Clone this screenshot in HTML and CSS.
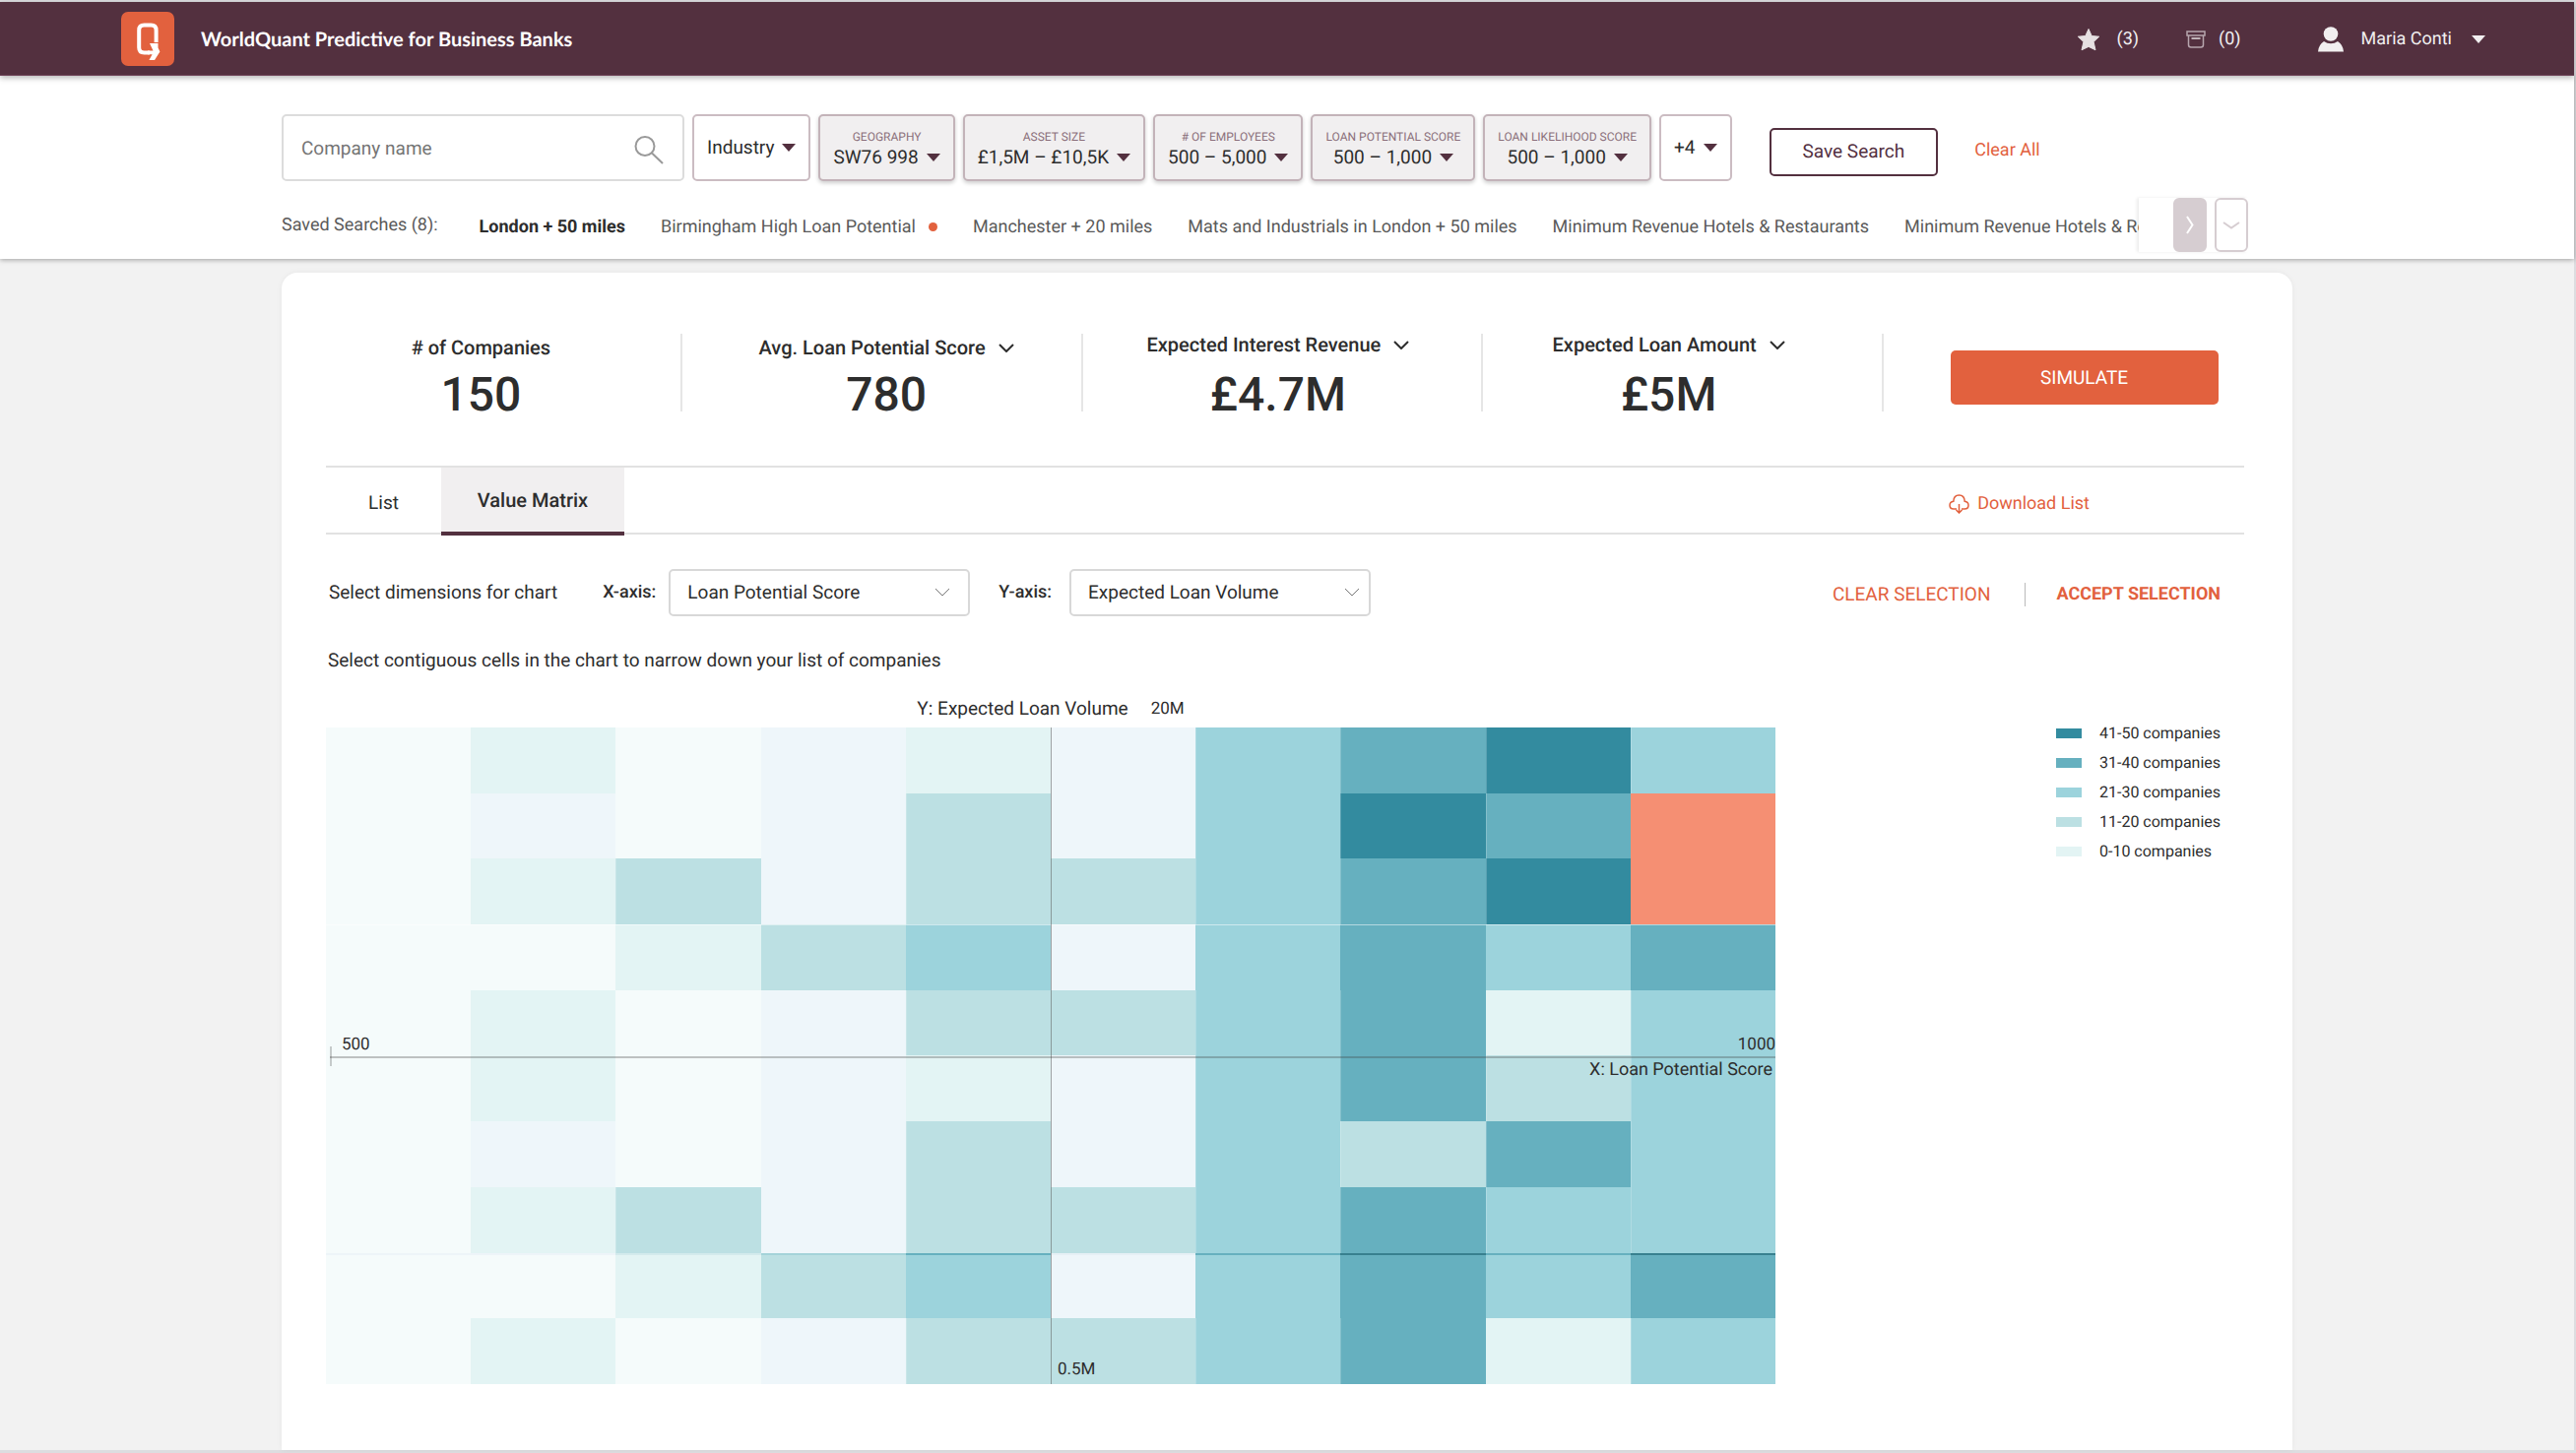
FILE: index.html
```html
<!DOCTYPE html>
<html lang="en">
<head>
<meta charset="utf-8">
<meta name="viewport" content="width=device-width, initial-scale=1">
<title>WorldQuant Predictive for Business Banks</title>
<link rel="stylesheet" href="styles.css">
</head>
<body>
<div class="page">
  <header class="topbar">
    <a class="logo" href="#" aria-label="Home">
      <svg width="54" height="55" viewBox="0 0 54 55" aria-hidden="true"><rect width="54" height="55" rx="7" fill="#e2613e"/><path d="M29 41.500H23.500Q18.200 41.500 18.200 36.200V18.800Q18.200 13.600 23.400 13.600H30.400Q35.600 13.600 35.600 18.800V31" fill="none" stroke="#fff" stroke-width="4"/><path d="M29 32H37.500V36.500L39.400 40.500L34 49H28.400L31.600 43.300H27V39.500H32.500Z" fill="#fff"/></svg>
    </a>
    <span class="brand">WorldQuant Predictive for Business Banks</span>
    <nav class="account">
      <a class="account-link favourites" href="#">
        <svg width="22" height="23" viewBox="0 0 22 23" aria-hidden="true"><path d="M11 0.5l3.2 7 7.5.7-5.6 5.3 1.9 8.3L11 18.4l-7 3.4 1.9-8.3L.3 8.2l7.5-.7z" fill="#e6e0e2" stroke="#e6e0e2" stroke-linejoin="round"/></svg>
        <span>(3)</span>
      </a>
      <a class="account-link archive" href="#">
        <svg width="20" height="18" viewBox="0 0 20 18" fill="none" stroke="#b6a5ad" stroke-width="1.5" aria-hidden="true"><path d="M1 1h18v4H1zM2.500 5v9.500q0 2.500 2.500 2.500h10q2.500 0 2.500-2.500V5"/><path d="M5.500 8h9" stroke="#e6e0e2"/></svg>
        <span>(0)</span>
      </a>
      <button class="account-link user" type="button">
        <svg width="26" height="26" viewBox="0 0 26 26" fill="#f1eff0" aria-hidden="true"><circle cx="13" cy="7.500" r="7.300"/><path d="M0 25.500q.5-7 6-10.500 3 2.300 7 2.300t7-2.300q5.500 3.500 6 10.500z"/></svg>
        <span>Maria Conti</span>
        <svg class="user-caret" width="14" height="8" viewBox="0 0 14 8" aria-hidden="true"><path d="M0 0h14L7 8z" fill="#f1eff0"/></svg>
      </button>
    </nav>
  </header>

  <section class="search-panel">
    <form class="filters">
      <div class="search-field">
        <input type="search" placeholder="Company name" aria-label="Company name">
        <svg width="30" height="29" viewBox="0 0 30 29" fill="none" stroke="#999" stroke-width="2" aria-hidden="true"><circle cx="11" cy="10.500" r="9.500"/><path d="M18 17.500L29 28"/></svg>
      </div>
      <button class="filter" type="button"><span class="filter-value">Industry <i class="caret"></i></span></button>
      <button class="filter filter-set" type="button"><span class="filter-name">GEOGRAPHY</span><span class="filter-value">SW76 998 <i class="caret"></i></span></button>
      <button class="filter filter-set" type="button"><span class="filter-name">ASSET SIZE</span><span class="filter-value">£1,5M – £10,5K <i class="caret"></i></span></button>
      <button class="filter filter-set" type="button"><span class="filter-name"># OF EMPLOYEES</span><span class="filter-value">500 – 5,000 <i class="caret"></i></span></button>
      <button class="filter filter-set" type="button"><span class="filter-name">LOAN POTENTIAL SCORE</span><span class="filter-value">500 – 1,000 <i class="caret"></i></span></button>
      <button class="filter filter-set" type="button"><span class="filter-name">LOAN LIKELIHOOD SCORE</span><span class="filter-value">500 – 1,000 <i class="caret"></i></span></button>
      <button class="filter" type="button"><span class="filter-value">+4 <i class="caret"></i></span></button>
      <button class="save-search" type="button">Save Search</button>
      <button class="clear-all" type="reset">Clear All</button>
    </form>
    <div class="saved">
      <span class="saved-title">Saved Searches (8):</span>
      <nav class="saved-list">
        <a class="saved-link saved-current" href="#">London + 50 miles</a>
        <a class="saved-link" href="#">Birmingham High Loan Potential<i class="dot"></i></a>
        <a class="saved-link" href="#">Manchester + 20 miles</a>
        <a class="saved-link" href="#">Mats and Industrials in London + 50 miles</a>
        <a class="saved-link" href="#">Minimum Revenue Hotels &amp; Restaurants</a>
        <a class="saved-link" href="#">Minimum Revenue Hotels &amp; Restaurants</a>
      </nav>
      <div class="saved-controls">
        <button class="step step-next" type="button" aria-label="Next searches"><svg width="8" height="19" viewBox="0 0 8 19" fill="none" stroke="#fff" stroke-width="2" aria-hidden="true"><path d="M1 1l5.500 8.500L1 18"/></svg></button>
        <button class="step" type="button" aria-label="Show all searches"><svg width="18" height="8" viewBox="0 0 18 8" fill="none" stroke="#d6cdd1" stroke-width="2" aria-hidden="true"><path d="M1 1l8 5.500L17 1"/></svg></button>
      </div>
    </div>
  </section>

  <main class="card">
    <section class="kpis">
      <div class="kpi"><div class="kpi-label"># of Companies</div><div class="kpi-value">150</div></div>
      <div class="kpi kpi-score"><button class="kpi-label" type="button">Avg. Loan Potential Score <svg class="chevron" viewBox="0 0 16 9" aria-hidden="true"><path d="M1 1l7 7 7-7"/></svg></button><div class="kpi-value">780</div></div>
      <div class="kpi kpi-money"><button class="kpi-label" type="button">Expected Interest Revenue <svg class="chevron" viewBox="0 0 16 9" aria-hidden="true"><path d="M1 1l7 7 7-7"/></svg></button><div class="kpi-value">£4.7M</div></div>
      <div class="kpi kpi-money kpi-amount"><button class="kpi-label" type="button">Expected Loan Amount <svg class="chevron" viewBox="0 0 16 9" aria-hidden="true"><path d="M1 1l7 7 7-7"/></svg></button><div class="kpi-value">£5M</div></div>
      <div class="kpi-action"><button class="simulate" type="button">SIMULATE</button></div>
    </section>

    <div class="card-body">
      <nav class="tabs">
        <a class="tab tab-list" href="#">List</a>
        <a class="tab tab-current" href="#">Value Matrix</a>
        <a class="download" href="#">
          <svg width="21" height="20" viewBox="0 0 21 20" fill="none" stroke="#e2613e" stroke-width="1.500" aria-hidden="true"><path d="M8 15H5Q1 15 1 11.200 1 8 4.800 7.300 5 1 10.500 1t5.700 6.300Q20 8 20 11.200 20 15 16 15h-3M10.500 10v9M7.500 16l3 3 3-3"/></svg>
          Download List
        </a>
      </nav>

      <div class="dimensions">
        <span class="dimensions-title">Select dimensions for chart</span>
        <label class="axis-label" for="x-axis">X-axis:</label>
        <span class="select">
          <select id="x-axis"><option>Loan Potential Score</option></select>
          <svg class="chevron" viewBox="0 0 16 9" aria-hidden="true"><path d="M1 1l7 7 7-7"/></svg>
        </span>
        <label class="axis-label axis-label-y" for="y-axis">Y-axis:</label>
        <span class="select select-y">
          <select id="y-axis"><option>Expected Loan Volume</option></select>
          <svg class="chevron" viewBox="0 0 16 9" aria-hidden="true"><path d="M1 1l7 7 7-7"/></svg>
        </span>
        <div class="selection">
          <button class="selection-button" type="button">CLEAR SELECTION</button>
          <button class="selection-button selection-accept" type="button">ACCEPT SELECTION</button>
        </div>
      </div>

      <p class="hint">Select contiguous cells in the chart to narrow down your list of companies</p>

      <section class="plot">
        <div class="chart">
          <div class="chart-title"><span>Y: Expected Loan Volume</span><span class="tick">20M</span></div>
          <div class="heatmap">
            <div class="cells" id="cells"></div>
            <div class="axis-x"></div>
            <div class="axis-y"></div>
            <span class="tick tick-left">500</span>
            <span class="tick tick-right">1000</span>
            <span class="axis-name">X: Loan Potential Score</span>
            <span class="tick tick-bottom">0.5M</span>
          </div>
        </div>
        <ul class="legend">
          <li><i class="swatch level-g"></i>41-50 companies</li>
          <li><i class="swatch level-f"></i>31-40 companies</li>
          <li><i class="swatch level-e"></i>21-30 companies</li>
          <li><i class="swatch level-d"></i>11-20 companies</li>
          <li><i class="swatch level-c"></i>0-10 companies</li>
        </ul>
      </section>
    </div>
  </main>
</div>
<script src="matrix.js"></script>
</body>
</html>
```
FILE: styles.css
```css
* { box-sizing: border-box; }

body {
  margin: 0;
  background: #f2f2f2;
  color: #2d2d2d;
  font: 19px/24px Roboto, sans-serif;
  text-rendering: geometricPrecision;
}

button, input, select { font: inherit; color: inherit; text-rendering: inherit; }
button { background: none; border: 0; padding: 0; cursor: pointer; white-space: nowrap; }
a { color: inherit; text-decoration: none; }
svg { display: block; flex: none; }

.page {
  display: flex;
  flex-direction: column;
  min-height: 100vh;
  border: solid #dddde0;
  border-width: 2px 2px 3px 0;
}

/* top bar */
.topbar {
  display: flex;
  align-items: center;
  height: 75px;
  padding: 0 90px 0 123px;
  background: #53303f;
  border-bottom: 1px solid #70455a;
  box-shadow: 0 2px 6px rgba(0, 0, 0, .3);
  color: #f1eff0;
  position: relative;
  z-index: 1;
}
.brand { margin-left: 27px; padding-top: 2px; color: #fff; font: 700 20px/24px Lato, sans-serif; }
.account { display: flex; align-items: center; margin-left: auto; padding-top: 2px; font-size: 18px; }
.account-link { display: flex; align-items: center; }
.favourites { gap: 17px; }
.archive { gap: 13px; margin-left: 48px; }
.user { gap: 18px; margin-left: 78px; }
.user-caret { margin-left: 2px; }

/* search panel */
.search-panel {
  padding: 39px 286px 7px;
  background: #fff;
  box-shadow: 0 1px 5px rgba(0, 0, 0, .35);
}
.filters { display: flex; align-items: center; gap: 8px; }
.search-field { position: relative; width: 409px; }
.search-field input {
  width: 100%;
  height: 68px;
  padding: 0 60px 0 18px;
  border: 2px solid #dcdcdc;
  border-radius: 5px;
  background: #fff;
  outline: 0;
}
.search-field input::placeholder { color: #757575; opacity: 1; }
.search-field svg { position: absolute; right: 21px; top: 22px; }
.filter {
  display: flex;
  flex-direction: column;
  align-items: center;
  justify-content: center;
  height: 68px;
  padding: 0 13px;
  border: 2px solid #cbbcc2;
  border-radius: 5px;
}
.filter-set {
  background: #f1eff0;
  border-color: #c3b3b9;
  box-shadow: 0 2px 4px rgba(0, 0, 0, .2);
}
.filter-name { color: #8b6f7b; font-size: 12px; line-height: 20px; }
.filter-value { display: flex; align-items: center; gap: 8px; line-height: 22px; }
.caret { border: solid transparent; border-width: 8px 7px 0; border-top-color: #53303f; }
.save-search {
  height: 49px;
  margin: 8px 0 0 30px;
  padding: 0 32px;
  border: 2px solid #53303f;
  border-radius: 5px;
  color: #53303f;
}
.clear-all { margin: 6px 0 0 29px; color: #e2613e; font-size: 18px; }

.saved {
  display: flex;
  align-items: center;
  margin-top: 17px;
  padding-right: 45px;
  color: #5a5a5a;
  font-size: 18px;
  white-space: nowrap;
}
.saved-list { display: flex; flex: 1; gap: 36px; min-width: 0; padding: 4px 0 0 42px; overflow: hidden; }
.saved-link { display: flex; align-items: center; gap: 13px; }
.saved-current { color: #2d2d2d; font-weight: 700; }
.dot { width: 9px; height: 9px; border-radius: 50%; background: #e2613e; }
.saved-controls { display: flex; gap: 8px; padding-left: 35px; box-shadow: -2px 0 3px rgba(0, 0, 0, .08); }
.step {
  display: flex;
  align-items: center;
  justify-content: center;
  width: 34px;
  height: 55px;
  border: 2px solid #d6cdd1;
  border-radius: 6px;
}
.step-next { background: #d6cdd1; }

/* results card */
.card {
  flex: 1;
  margin: 14px 286px 0;
  padding: 62px 0 60px;
  background: #fff;
  border-radius: 16px 16px 0 0;
  box-shadow: 0 0 6px rgba(0, 0, 0, .05);
}
.kpis { display: grid; grid-template-columns: repeat(4, 1fr) 415px; }
.kpi {
  display: flex;
  flex-direction: column;
  align-items: center;
  padding-top: 4px;
  border-right: 2px solid #e6e6e6;
}
.kpi-label {
  display: flex;
  align-items: center;
  gap: 13px;
  margin-bottom: 21px;
  font-size: 20px;
  font-weight: 500;
  line-height: 20px;
}
.kpi-value { font-size: 48px; font-weight: 500; line-height: 34px; }
.kpi-score { padding-left: 10px; }
.kpi-money { padding: 1px 8px 0 0; }
.kpi-money .kpi-label { margin-bottom: 24px; }
.kpi-amount { padding-right: 28px; }
.kpi-action { display: flex; align-items: center; justify-content: center; padding: 10px 8px 0 0; }
.simulate { width: 272px; height: 55px; border-radius: 5px; background: #e2613e; color: #fff; }
.chevron { width: 16px; height: 9px; fill: none; stroke: #2d2d2d; stroke-width: 2; }

.card-body { padding: 0 49px 0 45px; }
.tabs {
  display: flex;
  align-items: stretch;
  height: 70px;
  margin-top: 55px;
  border: solid #e2e2e2;
  border-width: 2px 0;
}
.tab { display: flex; align-items: center; justify-content: center; }
.tab-list { width: 117px; padding-top: 5px; }
.tab-current {
  width: 186px;
  margin-bottom: -3px;
  border-bottom: 4px solid #53303f;
  background: #f1eff0;
  font-size: 20px;
  font-weight: 500;
}
.download {
  display: flex;
  align-items: center;
  gap: 8px;
  margin: 7px 157px 0 auto;
  color: #e2613e;
  font-size: 18px;
}

.dimensions { display: flex; align-items: center; margin-top: 35px; padding: 0 24px 0 3px; }
.axis-label { margin: 0 13px 0 46px; font-size: 18px; font-weight: 500; }
.axis-label-y { margin: 0 18px 0 29px; }
.select { position: relative; width: 306px; }
.select select {
  width: 100%;
  height: 48px;
  padding: 0 40px 0 17px;
  border: 2px solid #d8d8d8;
  border-radius: 5px;
  background: #fff;
  appearance: none;
}
.select .chevron { position: absolute; right: 20px; top: 19px; stroke: #777; stroke-width: 1; pointer-events: none; }
.select-y .chevron { right: 11px; }
.selection { display: flex; gap: 34px; margin: 4px 0 0 auto; color: #e2613e; }
.selection-button { line-height: 24px; }
.selection-accept { padding-left: 32px; border-left: 1px solid #bbb; font-size: 18px; font-weight: 700; }

.hint { margin: 33px 0 25px 2px; }

/* value matrix */
.plot { display: grid; grid-template-columns: 1fr 191px; column-gap: 285px; }
.chart-title { display: flex; justify-content: center; gap: 23px; margin-bottom: 7px; }
.tick { font-size: 17px; }
.heatmap { position: relative; aspect-ratio: 1472 / 667; }
.cells { display: grid; grid-template: repeat(10, 1fr) / repeat(10, 1fr); height: 100%; }
.cell { min-width: 0; }
.level-a { background: #f5fbfb; --edge: #edf4f8; }
.level-b { background: #eef6fa; --edge: #e6f0f5; }
.level-c { background: #e3f4f4; --edge: #d3eaec; }
.level-d { background: #bce0e3; --edge: #a4d3d9; }
.level-e { background: #9cd3dc; --edge: #66b0bf; }
.level-f { background: #66b0bf; --edge: #38808f; }
.level-g { background: #338b9f; --edge: #246f80; }
.level-s { background: #f58f73; --edge: #e2613e; }
.cell.level-d, .cell.level-e, .cell.level-f, .cell.level-g { box-shadow: inset 1px 0 rgba(255, 255, 255, .2); }
.cell:nth-child(n+31):nth-child(-n+40) { box-shadow: inset 0 1px rgba(255, 255, 255, .5); }
.cell:nth-child(n+81):nth-child(-n+90) { box-shadow: inset 0 2px var(--edge); }

.axis-x, .axis-y, .tick-left, .tick-right, .tick-bottom, .axis-name { position: absolute; pointer-events: none; }
.axis-x { left: 4px; right: 0; top: 50%; height: 2px; background: rgba(60, 60, 60, .3); }
.axis-x::before { content: ""; position: absolute; left: 0; top: -10px; width: 2px; height: 20px; background: rgba(60, 60, 60, .25); }
.axis-y { left: 50%; top: 0; bottom: 0; width: 1px; background: rgba(60, 60, 60, .45); }
.tick-left { left: 16px; bottom: 50%; }
.tick-right { right: 0; bottom: 50%; }
.axis-name { right: 3px; top: 50%; font-size: 18px; line-height: 28px; }
.tick-bottom { left: 50%; bottom: 3px; padding-left: 7px; }

.legend { margin: 0; padding: 22px 0 0; list-style: none; font-size: 16px; line-height: 30px; }
.legend li { display: flex; align-items: center; gap: 18px; }
.swatch { width: 26px; height: 10px; }
```
FILE: matrix.js
```js
// One letter per cell: a = emptiest ... g = fullest, s = selected.
const rows = [
  "acabcbefge",
  "ababdbegfs",
  "acdbddefgs",
  "aacdebefef",
  "acabddefce",
  "acabcbefde",
  "ababdbedfe",
  "acdbddefee",
  "aacdebefef",
  "acabddefce"
];
const cells = document.getElementById("cells");
rows.forEach((row, y) => {
  [...row].forEach((level, x) => {
    const cell = document.createElement("button");
    cell.type = "button";
    cell.className = "cell level-" + level;
    cell.setAttribute("aria-label", "Row " + (y + 1) + ", column " + (x + 1));
    cell.setAttribute("aria-pressed", String(level === "s"));
    cells.appendChild(cell);
  });
});
```
